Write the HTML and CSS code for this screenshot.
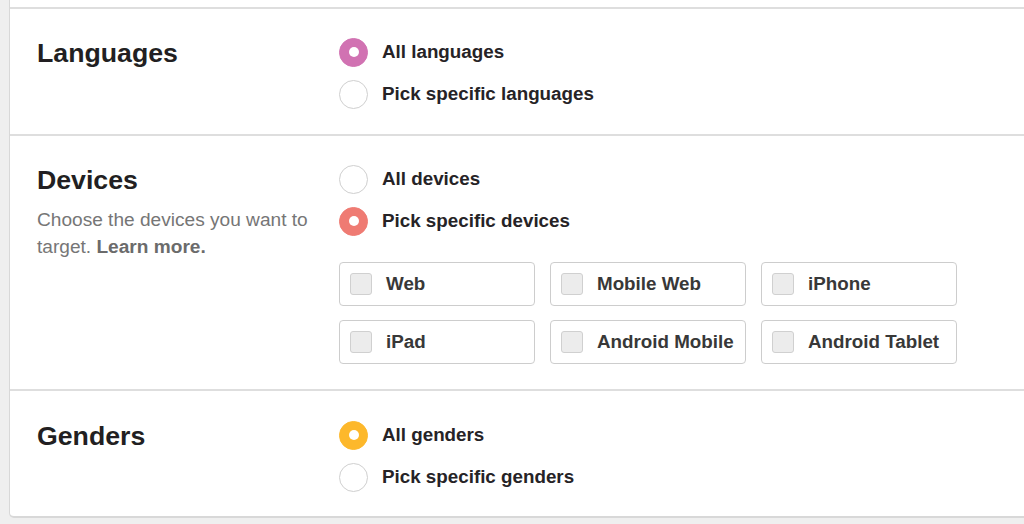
FILE: index.html
```html
<!DOCTYPE html>
<html>
<head>
<meta charset="utf-8">
<link rel="stylesheet" href="styles.css">
</head>
<body>
<div class="page">
  <div class="card">
    <div class="stub"></div>
    <section class="section">
      <div class="left">
        <h2 class="title">Languages</h2>
      </div>
      <div class="right">
        <div class="radio-row"><span class="radio on pink"></span><span class="rlabel">All languages</span></div>
        <div class="radio-row"><span class="radio"></span><span class="rlabel">Pick specific languages</span></div>
      </div>
    </section>
    <section class="section devices">
      <div class="left">
        <h2 class="title">Devices</h2>
        <p class="desc"><span>Choose the devices you want to</span><br><span>target.</span> <b>Learn more.</b></p>
      </div>
      <div class="right">
        <div class="radio-row"><span class="radio"></span><span class="rlabel">All devices</span></div>
        <div class="radio-row"><span class="radio on red"></span><span class="rlabel">Pick specific devices</span></div>
        <div class="grid">
          <div class="opt"><span class="box"></span><span class="olabel">Web</span></div>
          <div class="opt"><span class="box"></span><span class="olabel">Mobile Web</span></div>
          <div class="opt"><span class="box"></span><span class="olabel">iPhone</span></div>
          <div class="opt"><span class="box"></span><span class="olabel">iPad</span></div>
          <div class="opt"><span class="box"></span><span class="olabel">Android Mobile</span></div>
          <div class="opt"><span class="box"></span><span class="olabel">Android Tablet</span></div>
        </div>
      </div>
    </section>
    <section class="section last">
      <div class="left">
        <h2 class="title">Genders</h2>
      </div>
      <div class="right">
        <div class="radio-row"><span class="radio on yellow"></span><span class="rlabel">All genders</span></div>
        <div class="radio-row"><span class="radio"></span><span class="rlabel">Pick specific genders</span></div>
      </div>
    </section>
  </div>
</div>
</body>
</html>
```
FILE: styles.css
```css
html, body {
  margin: 0;
  padding: 0;
  background: #efefef;
  overflow: hidden;
  font-family: "Liberation Sans", Arial, sans-serif;
}
.page {
  padding-left: 9px;
  height: 524px;
}
.card {
  background: #fff;
  border-left: 1.5px solid #d8d8d8;
  border-bottom: 2px solid #d8d8d8;
  border-bottom-left-radius: 5px;
  width: calc(100% + 40px);
}
.stub {
  height: 7px;
  border-bottom: 2px solid #dedede;
}
.section {
  display: flex;
  padding: 22px 0 19px 27px;
  border-bottom: 2px solid #dedede;
}
.section.last {
  border-bottom: none;
  padding-top: 23px;
  padding-bottom: 18px;
}
.section.devices {
  padding-bottom: 25px;
}
.left {
  width: 302px;
  flex: none;
}
.title {
  margin: 0;
  font-size: 26.7px;
  line-height: 44px;
  font-weight: bold;
  color: #221f22;
}
.desc {
  margin: 4px 0 0;
  font-size: 19.1px;
  line-height: 27px;
  color: #767676;
  white-space: nowrap;
}
.desc b {
  color: #6b6b6b;
}
.right {
  display: flex;
  flex-direction: column;
}
.radio-row {
  display: flex;
  align-items: center;
  height: 42px;
}
.radio {
  width: 27px;
  height: 27px;
  border-radius: 50%;
  border: 1.5px solid #cfcfcf;
  background: #fff;
  flex: none;
  position: relative;
}
.radio.on::after {
  content: "";
  position: absolute;
  left: 50%;
  top: 50%;
  width: 10px;
  height: 10px;
  margin: -5px 0 0 -5px;
  border-radius: 50%;
  background: #fff;
}
.radio.pink { background: #d172b2; border-color: #d172b2; }
.radio.red { background: #ef7b73; border-color: #ef7b73; }
.radio.yellow { background: #fdb82b; border-color: #fdb82b; }
.rlabel {
  margin-left: 14px;
  font-size: 18.8px;
  font-weight: bold;
  color: #262326;
}
.grid {
  margin-top: 20px;
  display: grid;
  grid-template-columns: repeat(3, 196px);
  column-gap: 15px;
  row-gap: 14px;
}
.opt {
  height: 44px;
  box-sizing: border-box;
  border: 1.5px solid #cdcdcd;
  border-radius: 4px;
  display: flex;
  align-items: center;
  padding-left: 10px;
}
.box {
  width: 20px;
  height: 20px;
  border: 1.5px solid #d0d0d0;
  border-radius: 3px;
  background: #ececec;
  flex: none;
}
.olabel {
  margin-left: 14px;
  font-size: 18.8px;
  font-weight: bold;
  color: #383838;
}
```
